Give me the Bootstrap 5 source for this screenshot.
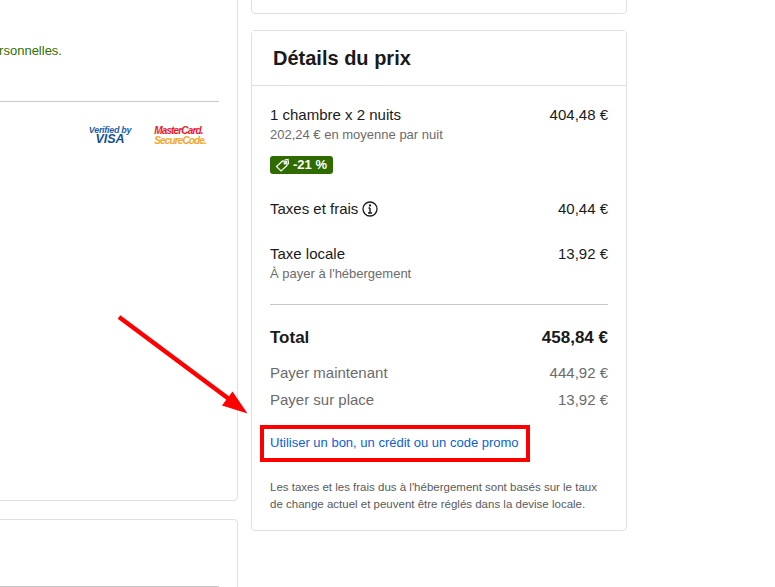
<!DOCTYPE html>
<html lang="fr">
<head>
    <meta charset="UTF-8">
    <meta name="viewport" content="width=device-width, initial-scale=1.0">
    <title>Détails du prix</title>
    <link href="https://cdn.jsdelivr.net/npm/bootstrap@5.3.0/dist/css/bootstrap.min.css" rel="stylesheet">
    <style>
        html, body {
            height: 587px;
            overflow: hidden;
        }
        body {
            position: relative;
            font-family: "Liberation Sans", Arial, sans-serif;
            color: #1a1a1a;
            background: #fff;
        }
        .card {
            --bs-card-border-color: #e0e0e0;
            --bs-card-border-radius: 4px;
            --bs-card-inner-border-radius: 3px;
        }
        .page-wrap {
            gap: 13px;
            margin-left: -300px;
            margin-top: -100px;
        }
        .main-col {
            width: 538px;
            flex: none;
        }
        .side-col {
            width: 376px;
            flex: none;
            gap: 16px;
        }
        .pay-card {
            height: 601px;
            padding: 0 18px 0 19px;
            margin-bottom: 18px;
        }
        .secure-note {
            margin-top: 141px;
            height: 59px;
            font-size: 13px;
            line-height: 18px;
            color: #2f6f00;
            width: 342px;
            text-align: right;
            white-space: nowrap;
        }
        .pay-rule {
            border-top: 1px solid #c8c8c8;
        }
        .logos {
            height: 60px;
            gap: 23px;
            padding: 23px 13px 0 0;
            font-weight: 700;
            font-style: italic;
        }
        .vbv {
            color: #1f5fa8;
            font-size: 9px;
            line-height: 10px;
            letter-spacing: -.3px;
            text-align: center;
        }
        .vbv b {
            display: block;
            font-size: 12.5px;
            line-height: 9px;
            letter-spacing: 0;
            color: #17508f;
        }
        .msc {
            margin-top: 1px;
            color: #e8192c;
            font-size: 10px;
            line-height: 10px;
            letter-spacing: -.85px;
        }
        .msc b {
            display: block;
            color: #f7a52b;
        }
        .lower-card {
            height: 120px;
            padding: 66px 18px 0 19px;
        }
        .top-stub {
            height: 114px;
        }
        .price-title {
            height: 55px;
            padding: 0 21px;
            background: #fff;
            border-bottom: 1px solid #e0e0e0;
        }
        .price-title h2 {
            font-size: 20px;
            font-weight: 700;
            line-height: 55px;
            margin: 0;
        }
        .price-body {
            padding: 20px 18px 0 18px;
            height: 444px;
        }
        .line-main {
            font-size: 15px;
            line-height: 18px;
        }
        .line-sub {
            margin-top: 1px;
            font-size: 13px;
            line-height: 20px;
            color: #6b6b6b;
        }
        .deal-tag {
            width: 63px;
            height: 18px;
            margin-top: 11px;
            background: #2f6b00;
            border-radius: 3px;
            color: #fff;
            font-size: 13px;
            font-weight: 700;
            gap: 3px;
            padding-left: 5px;
        }
        .tax-row {
            margin-top: 26px;
        }
        .local-row {
            margin-top: 27px;
        }
        .price-rule {
            height: 1px;
            margin-top: 20px;
            background: #c8c8c8;
        }
        .line-total {
            margin-top: 23px;
            font-size: 17px;
            font-weight: 700;
            line-height: 20px;
        }
        .line-pay {
            font-size: 15px;
            line-height: 27px;
            color: #6b6b6b;
        }
        .pay-first {
            margin-top: 11px;
        }
        .promo-link {
            display: block;
            margin-top: 22px;
            font-size: 13px;
            line-height: 16px;
            color: #0a5fd6;
            text-decoration: none;
        }
        .fine-print {
            margin: 28px 0 0;
            font-size: 11.5px;
            line-height: 17px;
            color: #5a5a5a;
        }
        .mark-box {
            position: absolute;
            left: 260px;
            top: 425px;
            width: 270px;
            height: 37px;
            border: 4px solid #f00;
        }
        .mark-arrow {
            position: absolute;
            left: 100px;
            top: 300px;
        }
    </style>
</head>
<body>

    <div class="d-flex page-wrap">
        <!-- Colonne paiement -->
        <div class="main-col">
            <div class="card pay-card">
                <div class="secure-note">Nous protégeons vos données personnelles.</div>
                <div class="pay-rule"></div>
                <div class="d-flex justify-content-end logos">
                    <div class="vbv">Verified by<b>VISA</b></div>
                    <div class="msc">MasterCard.<b>SecureCode.</b></div>
                </div>
            </div>
            <div class="card lower-card">
                <div class="pay-rule"></div>
            </div>
        </div>

        <!-- Colonne prix -->
        <div class="d-flex flex-column side-col">
            <div class="card top-stub"></div>
            <div class="card">
                <div class="price-title"><h2>Détails du prix</h2></div>
                <div class="price-body">
                    <div class="d-flex justify-content-between line-main">
                        <span>1 chambre x 2 nuits</span>
                        <span>404,48 €</span>
                    </div>
                    <div class="line-sub">202,24 € en moyenne par nuit</div>
                    <div class="d-flex align-items-center deal-tag">
                        <svg width="15" height="15" viewBox="0 0 15 15" fill="none" stroke="#fff" stroke-width="1.2" aria-hidden="true">
                            <path d="M1.5 8.5 7.5 3l4 .5.5 4-6 5.5z"/>
                            <path d="M9.5 2 13 1.5l.5 4-1 1"/>
                            <circle cx="9.8" cy="5.3" r=".7"/>
                        </svg>
                        <span>-21 %</span>
                    </div>
                    <div class="d-flex justify-content-between line-main tax-row">
                        <span class="d-flex align-items-center gap-1">Taxes et frais
                            <svg width="16" height="16" viewBox="0 0 16 16" fill="none" stroke="#1a1a1a" aria-hidden="true">
                                <circle cx="8" cy="8" r="7" stroke-width="1.3"/>
                                <path d="M8 7v5M6 12h4M6.5 7H8" stroke-width="1.4"/>
                                <circle cx="8" cy="4.5" r=".6" stroke-width="1.1"/>
                            </svg>
                        </span>
                        <span>40,44 €</span>
                    </div>
                    <div class="d-flex justify-content-between line-main local-row">
                        <span>Taxe locale</span>
                        <span>13,92 €</span>
                    </div>
                    <div class="line-sub">À payer à l'hébergement</div>
                    <div class="price-rule"></div>
                    <div class="d-flex justify-content-between line-total">
                        <span>Total</span>
                        <span>458,84 €</span>
                    </div>
                    <div class="d-flex justify-content-between line-pay pay-first">
                        <span>Payer maintenant</span>
                        <span>444,92 €</span>
                    </div>
                    <div class="d-flex justify-content-between line-pay">
                        <span>Payer sur place</span>
                        <span>13,92 €</span>
                    </div>
                    <a href="#" class="promo-link">Utiliser un bon, un crédit ou un code promo</a>
                    <p class="fine-print">Les taxes et les frais dus à l'hébergement sont basés sur le taux de change actuel et peuvent être réglés dans la devise locale.</p>
                </div>
            </div>
        </div>
    </div>

    <!-- Annotation rouge -->
    <div class="mark-box"></div>
    <svg class="mark-arrow" width="160" height="125" viewBox="100 300 160 125" aria-hidden="true">
        <path d="M119 317 229 399" stroke="#f00" stroke-width="4.5" fill="none"/>
        <path d="M247.5 413.5 222 405.5 232.5 391.5z" fill="#f00"/>
    </svg>

    <script src="https://cdn.jsdelivr.net/npm/bootstrap@5.3.0/dist/js/bootstrap.bundle.min.js"></script>

</body>
</html>
